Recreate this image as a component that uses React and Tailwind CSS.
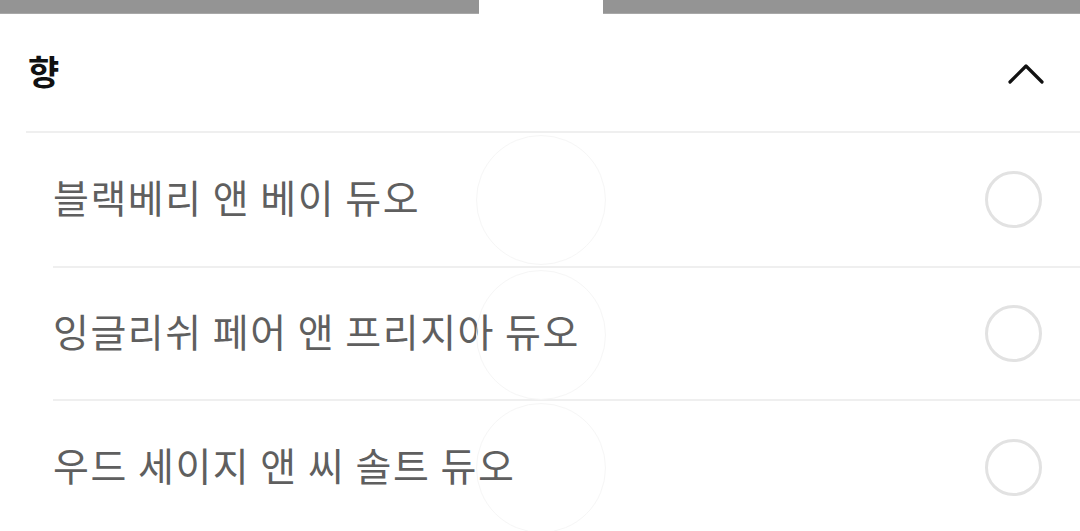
import { useState } from "react";

const options = ["블랙베리 앤 베이 듀오", "잉글리쉬 페어 앤 프리지아 듀오", "우드 세이지 앤 씨 솔트 듀오"];

const ChevronUp = () => (
  <svg width="36" height="24" viewBox="0 0 36 24" fill="none" aria-hidden="true">
    <path d="M2 21 L18 5 L34 21" stroke="#111" strokeWidth="3.2" strokeLinecap="round" strokeLinejoin="round" />
  </svg>
);

const OptionRow = ({ label, checked, onSelect, first, last }) => (
  <button
    type="button"
    onClick={onSelect}
    className={`relative flex w-full items-center justify-between pr-[38px] text-left ${
      first ? "h-[135px]" : "h-[133px]"
    } ${last ? "" : "border-b-2 border-[#efefef]"}`}
  >
    <span className="text-[39px] leading-none text-[#5f5f5f] tracking-[1.5px] pb-[6px]">{label}</span>
    <span
      className={`w-[57px] h-[57px] rounded-full border-[3px] ${
        checked ? "border-[#222]" : "border-[#e2e2e2]"
      }`}
    />
    <span className="pointer-events-none absolute left-[423px] top-[2px] w-[130px] h-[130px] rounded-full border border-[#f6f6f6]" />
  </button>
);

export default function App() {
  const [selected, setSelected] = useState(null);
  const [open, setOpen] = useState(true);

  return (
    <div
      className="w-[1080px] h-[531px] overflow-hidden bg-white"
      style={{ fontFamily: '"Noto Sans CJK KR", "Noto Sans", sans-serif' }}
    >
      <div className="flex h-[14px]">
        <div className="w-[479px] bg-[#949494] border-b border-[#a8a8a8]" />
        <div className="flex-1" />
        <div className="w-[477px] bg-[#949494] border-b border-[#a8a8a8]" />
      </div>

      <div className="pl-[26px]">
        <button
          type="button"
          onClick={() => setOpen(!open)}
          className="flex w-full items-center justify-between h-[119px] pl-[2px] pr-[36px] border-b-2 border-[#efefef]"
        >
          <span className="text-[34px] font-bold leading-none text-[#111] pb-[3px]">향</span>
          <ChevronUp />
        </button>

        {open && (
          <div className="pl-[27px]">
            {options.map((opt, i) => (
              <OptionRow
                key={opt}
                label={opt}
                checked={selected === i}
                onSelect={() => setSelected(i)}
                first={i === 0}
                last={i === options.length - 1}
              />
            ))}
          </div>
        )}
      </div>
    </div>
  );
}
